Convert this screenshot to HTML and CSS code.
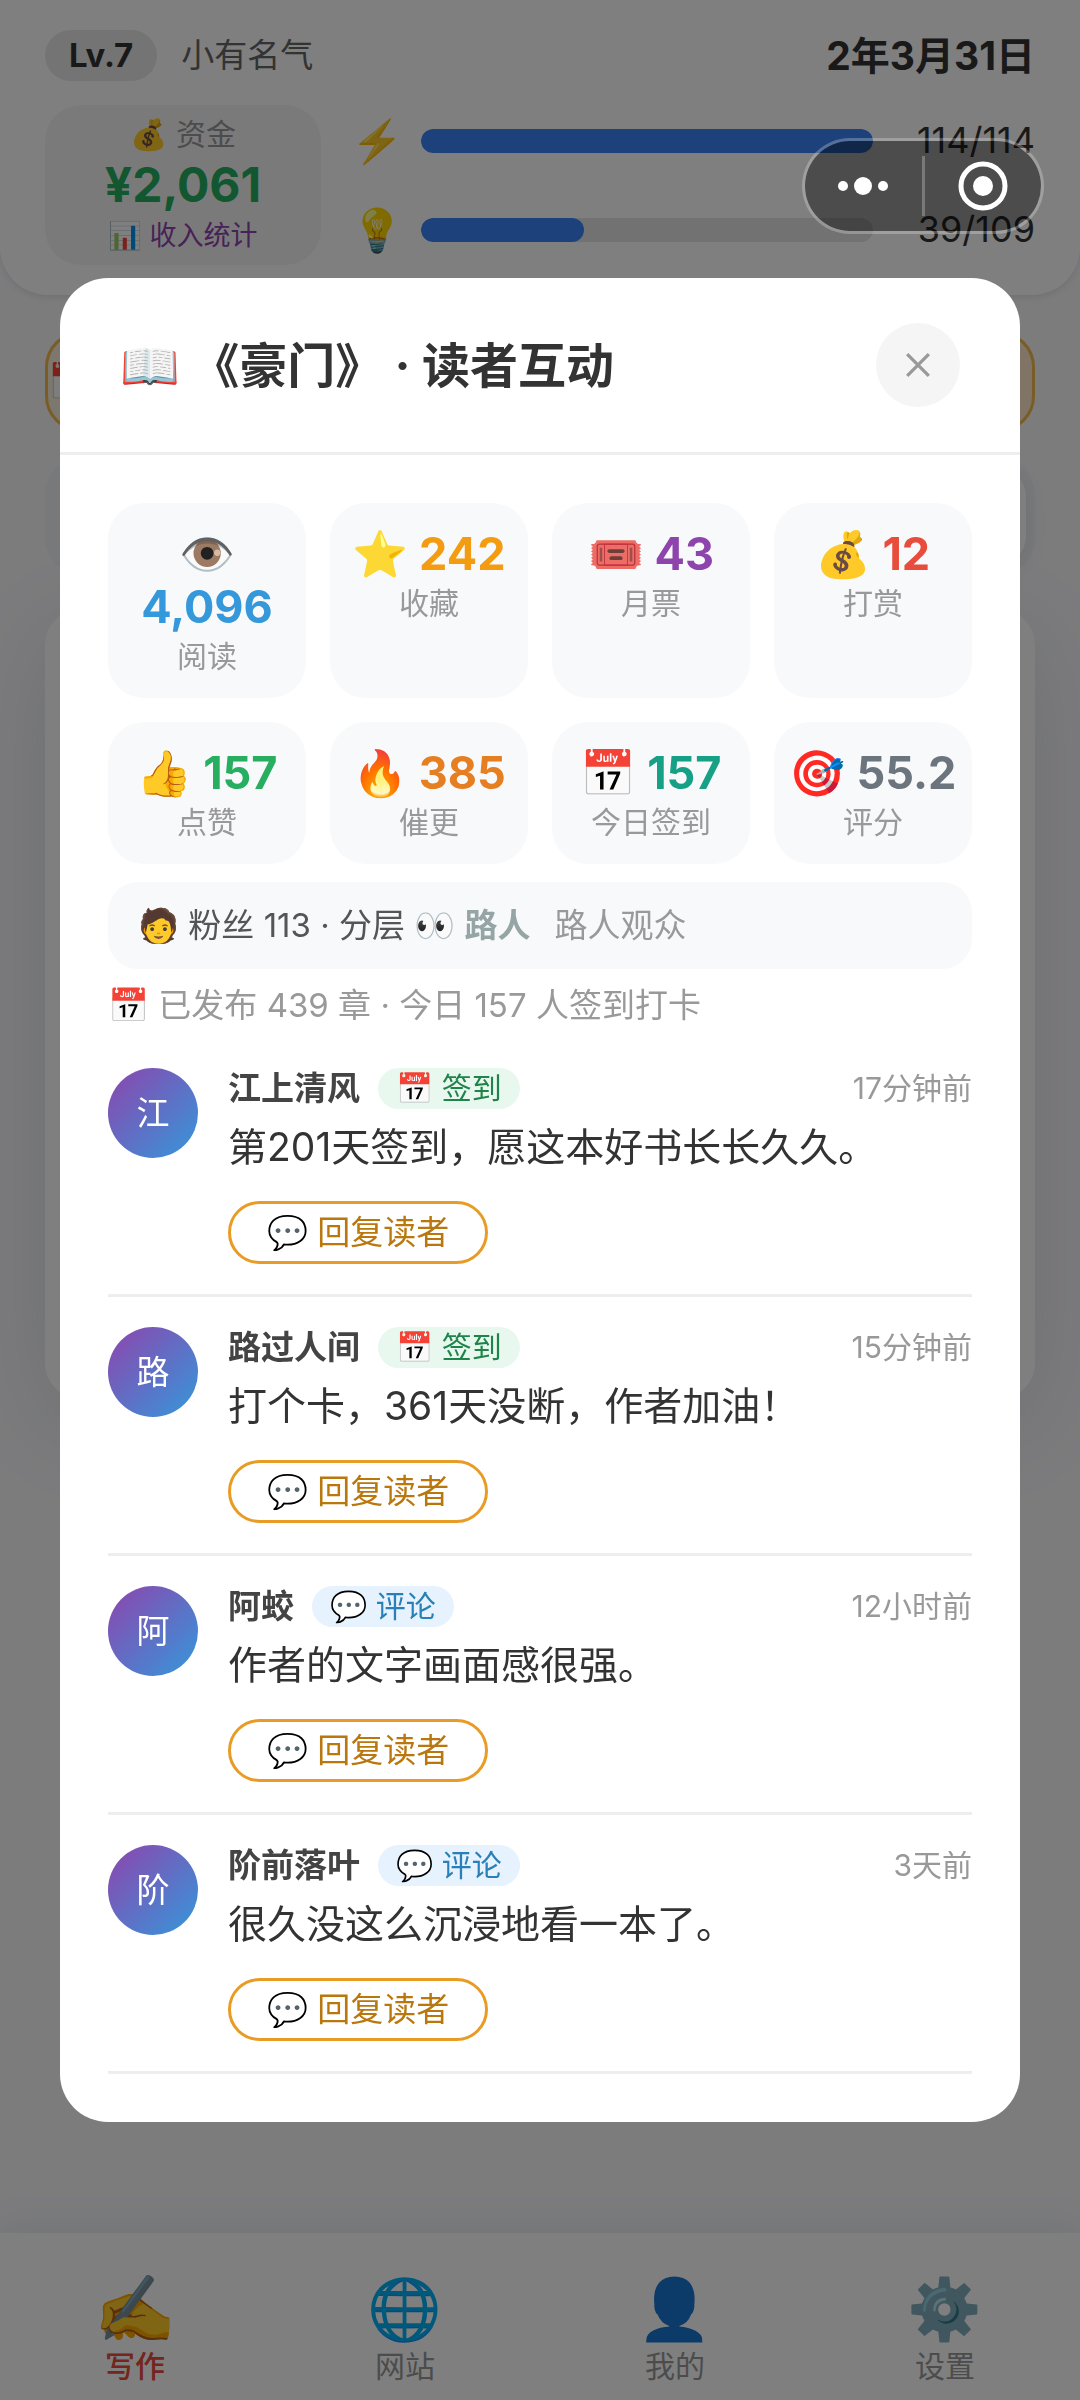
FILE: index.html
```html
<!DOCTYPE html>
<html lang="zh-CN">
<head>
  <meta charset="UTF-8" />
  <meta name="viewport" content="width=device-width, initial-scale=1.0" />
  <title>读者互动</title>
  <link rel="stylesheet" href="styles.css">
</head>
<body>
  <div class="page">
    <header class="top">
      <div class="top-row">
        <span class="level">Lv.7</span>
        <span class="rank">小有名气</span>
        <span class="date">2年3月31日</span>
      </div>
      <div class="top-main">
        <div class="fund">
          <div class="fund-label">💰 资金</div>
          <div class="fund-value">¥2,061</div>
          <button class="fund-link">📊 收入统计</button>
        </div>
        <div class="bars">
          <div class="bar-row">
            <span class="bar-icon">⚡</span>
            <div class="bar"><div class="bar-fill" style="width: 100%"></div></div>
            <span class="bar-num">114/114</span>
          </div>
          <div class="bar-row">
            <span class="bar-icon">💡</span>
            <div class="bar"><div class="bar-fill" style="width: 36%"></div></div>
            <span class="bar-num">39/109</span>
          </div>
        </div>
      </div>
    </header>

    <main class="content">
      <div class="banner">📅</div>
      <div class="tabs"><div class="tab"></div><div class="tab active"></div></div>
      <div class="panel"></div>
    </main>

    <nav class="nav">
      <a class="nav-item active" href="#"><span class="nav-icon">✍️</span>写作</a>
      <a class="nav-item" href="#"><span class="nav-icon">🌐</span>网站</a>
      <a class="nav-item" href="#"><span class="nav-icon">👤</span>我的</a>
      <a class="nav-item" href="#"><span class="nav-icon">⚙️</span>设置</a>
    </nav>
  </div>

  <div class="mask">
    <div class="modal">
      <div class="modal-head">
        <h1>📖 《豪门》 · 读者互动</h1>
        <button class="close" aria-label="关闭">
          <svg viewBox="0 0 24 24" width="26" height="26"><path d="M2 2L22 22M22 2L2 22" /></svg>
        </button>
      </div>

      <div class="modal-body">
        <div class="stats">
          <div class="stat"><div class="stat-value blue">👁️ 4,096</div><div class="stat-label">阅读</div></div>
          <div class="stat"><div class="stat-value yellow">⭐ 242</div><div class="stat-label">收藏</div></div>
          <div class="stat"><div class="stat-value purple">🎟️ 43</div><div class="stat-label">月票</div></div>
          <div class="stat"><div class="stat-value red">💰 12</div><div class="stat-label">打赏</div></div>
          <div class="stat"><div class="stat-value green">👍 157</div><div class="stat-label">点赞</div></div>
          <div class="stat"><div class="stat-value orange">🔥 385</div><div class="stat-label">催更</div></div>
          <div class="stat"><div class="stat-value teal">📅 157</div><div class="stat-label">今日签到</div></div>
          <div class="stat"><div class="stat-value gray">🎯 55.2</div><div class="stat-label">评分</div></div>
        </div>

        <div class="fans">🧑 粉丝 113 · 分层 👀 <b>路人</b><span class="fans-desc">路人观众</span></div>
        <div class="summary">📅 已发布 439 章 · 今日 157 人签到打卡</div>

        <div class="comment">
          <div class="avatar">江</div>
          <div class="comment-main">
            <div class="comment-head">
              <span class="name">江上清风</span>
              <span class="tag sign">📅 签到</span>
              <span class="time">17分钟前</span>
            </div>
            <p class="text">第201天签到，愿这本好书长长久久。</p>
            <button class="reply">💬 回复读者</button>
          </div>
        </div>

        <div class="comment">
          <div class="avatar">路</div>
          <div class="comment-main">
            <div class="comment-head">
              <span class="name">路过人间</span>
              <span class="tag sign">📅 签到</span>
              <span class="time">15分钟前</span>
            </div>
            <p class="text">打个卡，361天没断，作者加油！</p>
            <button class="reply">💬 回复读者</button>
          </div>
        </div>

        <div class="comment">
          <div class="avatar">阿</div>
          <div class="comment-main">
            <div class="comment-head">
              <span class="name">阿蛟</span>
              <span class="tag talk">💬 评论</span>
              <span class="time">12小时前</span>
            </div>
            <p class="text">作者的文字画面感很强。</p>
            <button class="reply">💬 回复读者</button>
          </div>
        </div>

        <div class="comment">
          <div class="avatar">阶</div>
          <div class="comment-main">
            <div class="comment-head">
              <span class="name">阶前落叶</span>
              <span class="tag talk">💬 评论</span>
              <span class="time">3天前</span>
            </div>
            <p class="text">很久没这么沉浸地看一本了。</p>
            <button class="reply">💬 回复读者</button>
          </div>
        </div>
      </div>
    </div>
  </div>

  <div class="capsule">
    <button aria-label="更多">
      <svg viewBox="0 0 52 20" width="52" height="20" fill="#fff">
        <circle cx="6" cy="10" r="5" /><circle cx="26" cy="10" r="9" /><circle cx="46" cy="10" r="5" />
      </svg>
    </button>
    <span class="capsule-line"></span>
    <button aria-label="退出">
      <svg viewBox="0 0 52 52" width="52" height="52" fill="#fff">
        <circle cx="26" cy="26" r="22" fill="none" stroke="#fff" stroke-width="5" /><circle cx="26" cy="26" r="10" />
      </svg>
    </button>
  </div>
</body>
</html>
```

FILE: styles.css
```css
* {
  box-sizing: border-box;
}

body {
  margin: 0;
  background: #f8f8fb;
  color: #333;
  font-family: Inter, "Noto Sans CJK SC", "Noto Color Emoji", sans-serif;
  font-size: 33px;
}

button {
  padding: 0;
  border: none;
  background: none;
  font-family: inherit;
  cursor: pointer;
}

/* page behind the dialog */
.page {
  min-height: 100vh;
  display: flex;
  flex-direction: column;
}

.top {
  padding: 30px 45px;
  border-radius: 0 0 48px 48px;
  background: #fff;
  box-shadow: 0 3px 6px rgba(0, 0, 0, 0.08);
}

.top-row {
  display: flex;
  align-items: center;
  height: 51px;
  margin-bottom: 24px;
  line-height: 51px;
}

.level {
  padding: 0 24px;
  border-radius: 26px;
  background: #e8e8e8;
  font-weight: bold;
}

.rank {
  margin-left: 24px;
  color: #666;
}

.date {
  margin-left: auto;
  font-size: 39px;
  font-weight: bold;
}

.top-main {
  display: flex;
  gap: 30px;
}

.fund {
  width: 276px;
  height: 160px;
  display: flex;
  flex-direction: column;
  align-items: center;
  justify-content: center;
  border-radius: 36px;
  background: #f5f5f5;
}

.fund-label {
  font-size: 30px;
  line-height: 36px;
  color: #999;
}

.fund-value {
  font-size: 48px;
  line-height: 66px;
  font-weight: bold;
  color: #27ae60;
}

.fund-link {
  font-size: 27px;
  line-height: 36px;
  color: #8e44ad;
}

.bars {
  flex: 1;
  display: flex;
  flex-direction: column;
  justify-content: center;
  gap: 30px;
}

.bar-row {
  display: flex;
  align-items: center;
  gap: 18px;
  line-height: 59px;
}

.bar-icon {
  width: 52px;
  font-size: 42px;
  text-align: center;
}

.bar {
  flex: 1;
  height: 24px;
  border-radius: 12px;
  background: #e5e5e5;
  overflow: hidden;
}

.bar-fill {
  height: 100%;
  border-radius: 12px;
  background: #3b82f6;
}

.bar-num {
  width: 144px;
  font-size: 36px;
  text-align: right;
}

.content {
  flex: 1;
  padding: 36px 45px;
}

.banner {
  height: 101px;
  border: 3px solid #f5b84c;
  border-radius: 36px;
  background: linear-gradient(90deg, #f9f0dc, #ffe8cc);
  font-size: 36px;
  line-height: 95px;
}

.tabs {
  display: flex;
  height: 117px;
  margin: 26px 0 34px;
  padding: 9px;
  border-radius: 36px;
  background: #eff2f4;
}

.tab {
  flex: 1;
  border-radius: 30px;
}

.tab.active {
  background: #fff;
  box-shadow: 0 6px 24px rgba(0, 0, 0, 0.08);
}

.panel {
  height: 790px;
  border-radius: 36px;
  background: #fff;
  box-shadow: 0 24px 96px rgba(31, 45, 61, 0.12);
}

.nav {
  display: flex;
  height: 167px;
  padding-top: 36px;
  background: #fff;
  box-shadow: 0 -6px 36px rgba(31, 45, 61, 0.08);
}

.nav-item {
  flex: 1;
  display: flex;
  flex-direction: column;
  align-items: center;
  font-size: 30px;
  line-height: 39px;
  color: #999;
  text-decoration: none;
}

.nav-icon {
  font-size: 60px;
  line-height: 78px;
}

.nav-item.active {
  color: #e74c3c;
  font-weight: 500;
}

.nav-item.active .nav-icon {
  font-size: 66px;
}

/* dialog */
.mask {
  position: fixed;
  inset: 0;
  display: flex;
  align-items: center;
  padding: 0 60px;
  background: rgba(0, 0, 0, 0.5);
}

.modal {
  width: 100%;
  border-radius: 48px;
  background: #fff;
  overflow: hidden;
}

.modal-head {
  display: flex;
  align-items: center;
  justify-content: space-between;
  padding: 45px 60px;
  border-bottom: 3px solid #eee;
}

h1 {
  margin: 0;
  font-size: 48px;
  line-height: 63px;
}

.close {
  display: flex;
  align-items: center;
  justify-content: center;
  width: 84px;
  height: 84px;
  border-radius: 50%;
  background: #f5f5f5;
}

.close path {
  stroke: #999;
  stroke-width: 3;
}

.modal-body {
  padding: 48px;
}

.stats {
  display: grid;
  grid-template-columns: repeat(4, 1fr);
  gap: 24px;
}

.stat {
  padding: 24px 12px;
  border-radius: 36px;
  background: #f8f9fb;
  text-align: center;
}

.stat-value {
  font-size: 45px;
  line-height: 53px;
  font-weight: bold;
}

.stat-label {
  margin-top: 6px;
  font-size: 30px;
  line-height: 35px;
  color: #999;
}

.blue { color: #3498db; }
.yellow { color: #f39c12; }
.purple { color: #8e44ad; }
.red { color: #e74c3c; }
.green { color: #27ae60; }
.orange { color: #e67e22; }
.teal { color: #16a085; }
.gray { color: #6c757d; }

.fans {
  margin-top: 18px;
  padding: 0 30px;
  border-radius: 30px;
  background: #f8f9fb;
  line-height: 87px;
  color: #555;
}

.fans b {
  color: #95a5a6;
}

.fans-desc {
  margin-left: 24px;
  color: #999;
}

.summary {
  margin: 12px 0 9px;
  line-height: 48px;
  color: #999;
}

.comment {
  display: flex;
  gap: 30px;
  padding: 30px 0;
  border-bottom: 3px solid #eee;
}

.avatar {
  width: 90px;
  height: 90px;
  border-radius: 50%;
  background: linear-gradient(135deg, #8e44ad, #3498db);
  color: #fff;
  line-height: 90px;
  text-align: center;
}

.comment-main {
  flex: 1;
}

.comment-head {
  display: flex;
  align-items: center;
  gap: 18px;
  line-height: 41px;
}

.name {
  font-weight: bold;
  color: #444;
}

.tag {
  padding: 0 18px;
  border-radius: 24px;
  font-size: 30px;
}

.sign {
  background: #e8f8ef;
  color: #1e8449;
}

.talk {
  background: #e6f2fd;
  color: #2980b9;
}

.time {
  margin-left: auto;
  font-size: 30px;
  color: #999;
}

.text {
  margin: 9px 0 25px;
  font-size: 39px;
  line-height: 58px;
}

.reply {
  display: block;
  height: 63px;
  padding: 0 36px;
  border: 3px solid #e89c25;
  border-radius: 32px;
  font-size: 33px;
  line-height: 57px;
  color: #b9770e;
}

/* mini program menu, stays above everything */
.capsule {
  position: fixed;
  top: 138px;
  right: 36px;
  display: flex;
  align-items: center;
  width: 242px;
  height: 96px;
  border: 3px solid rgba(255, 255, 255, 0.25);
  border-radius: 48px;
  background: rgba(0, 0, 0, 0.4);
  background-clip: padding-box;
}

.capsule button {
  flex: 1;
  display: flex;
  justify-content: center;
}

.capsule-line {
  width: 3px;
  height: 60px;
  background: rgba(255, 255, 255, 0.25);
}
```
